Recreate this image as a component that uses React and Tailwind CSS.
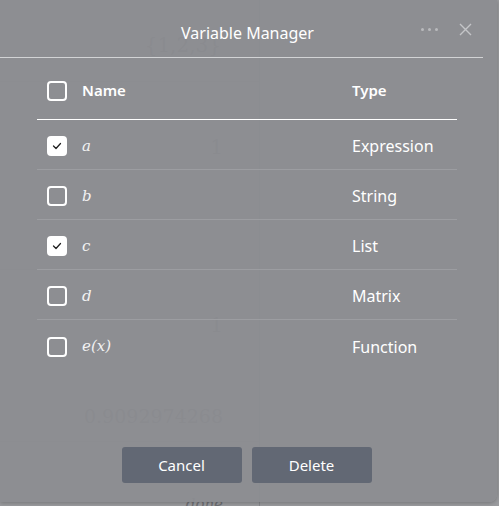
import React, { useState } from 'react';

const VARS = [
  { name: 'a', type: 'Expression', checked: true },
  { name: 'b', type: 'String', checked: false },
  { name: 'c', type: 'List', checked: true },
  { name: 'd', type: 'Matrix', checked: false },
  { name: 'e(x)', type: 'Function', checked: false },
];

function Check({ checked, onClick }) {
  return (
    <button
      onClick={onClick}
      className={`w-5 h-5 rounded-[4px] flex items-center justify-center shrink-0 ${
        checked ? 'bg-white' : 'border-2 border-white'
      }`}
    >
      {checked && (
        <svg width="10" height="8" viewBox="0 0 10 8" fill="none">
          <path d="M1.5 4l2.5 2.5L8.5 1.5" stroke="#222" strokeWidth="1.3" strokeLinecap="round" strokeLinejoin="round" />
        </svg>
      )}
    </button>
  );
}

export default function App() {
  const [rows, setRows] = useState(VARS);
  const allChecked = rows.every(r => r.checked);

  const toggle = (i) => setRows(rs => rs.map((r, j) => (j === i ? { ...r, checked: !r.checked } : r)));

  return (
    <div className="relative w-[499px] h-[506px] overflow-hidden bg-[#9a9b9e]" style={{ fontFamily: '"Noto Sans", "Open Sans", sans-serif' }}>
      {/* Faint page behind the dialog */}
      <div className="w-[260px] h-full border-r border-[#86878b] flex flex-col text-[#6f7074]" style={{ fontFamily: '"DejaVu Serif", "Liberation Serif", serif' }}>
        <div className="h-[82px] border-b border-[#888a8d] flex items-start justify-end pr-[38px] pt-[30px] text-[20px]">{'{1,2,3}'}</div>
        <div className="h-[188px] border-b border-[#888a8d] flex items-start justify-end pr-[36px] pt-[50px] text-[20px]">1</div>
        <div className="h-[172px] border-b border-[#888a8d] flex flex-col items-end pr-[36px] pt-[40px] text-[20px]">
          <span>1</span>
          <span className="mt-[62px] text-[19px]">0.9092974268</span>
        </div>
        <div className="flex-1 flex items-end justify-end pr-[36px] italic text-[15px] leading-none translate-y-[6px]">done</div>
      </div>

      {/* Dialog */}
      <div className="absolute left-0 top-0 w-[497px] h-[502px] rounded-br-lg bg-[#8c8d91]/[0.93] shadow-[0_1px_4px_rgba(0,0,0,0.25)] text-white flex flex-col">
        <div className="h-[58px] relative flex items-center justify-center border-b border-[#d2d3d5] mr-[14px]">
          <span className="text-[16px] pt-[8px] pl-[12px]">Variable Manager</span>
          <div className="absolute right-[45px] top-[28px] flex items-center gap-[4px]">
            <span className="w-[3px] h-[3px] rounded-full bg-[#b9babd]" />
            <span className="w-[3px] h-[3px] rounded-full bg-[#b9babd]" />
            <span className="w-[3px] h-[3px] rounded-full bg-[#b9babd]" />
          </div>
          <svg className="absolute right-[11px] top-[23px]" width="13" height="13" viewBox="0 0 13 13">
            <path d="M1 1l11 11M12 1L1 12" stroke="#c4c5c8" strokeWidth="1.4" />
          </svg>
        </div>

        <div className="mx-[37px] w-[420px]">
          <div className="h-[62px] flex items-center border-b border-white pl-[10px] pt-[4px] font-semibold text-[15px]">
            <Check checked={allChecked} onClick={() => setRows(rs => rs.map(r => ({ ...r, checked: !allChecked })))} />
            <span className="ml-[15px] w-[270px]">Name</span>
            <span>Type</span>
          </div>
          {rows.map((r, i) => (
            <div key={r.name} className={`h-[50px] flex items-center pl-[10px] pt-[3px] text-[16px] ${i < rows.length - 1 ? 'border-b border-[#9c9da1]' : ''}`}>
              <Check checked={r.checked} onClick={() => toggle(i)} />
              <span className="ml-[15px] w-[270px] italic text-[15px] text-[#f2f2f3]" style={{ fontFamily: '"DejaVu Serif", "Liberation Serif", serif' }}>{r.name}</span>
              <span>{r.type}</span>
            </div>
          ))}
        </div>

        <div className="mt-auto mb-[19px] flex justify-center gap-[10px] pr-[4px]">
          <button className="w-[120px] h-[36px] rounded-[3px] bg-[#626874] text-[15px]">Cancel</button>
          <button className="w-[120px] h-[36px] rounded-[3px] bg-[#626874] text-[15px]">Delete</button>
        </div>
      </div>
    </div>
  );
}
